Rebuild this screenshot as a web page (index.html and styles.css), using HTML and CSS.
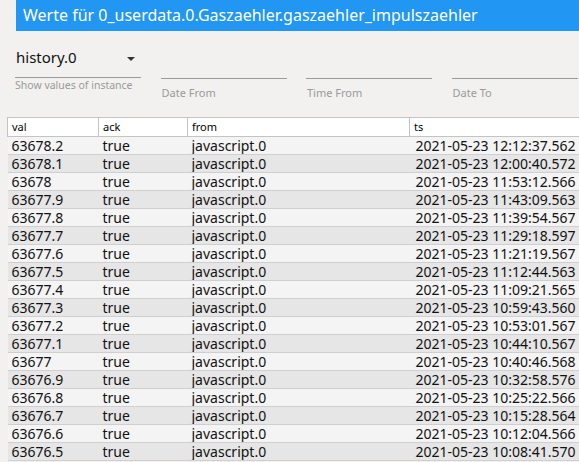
FILE: index.html
```html
<!DOCTYPE html>
<html lang="de">
<head>
<meta charset="utf-8">
<title>Werte</title>
<link rel="stylesheet" href="styles.css">
</head>
<body>
<div class="dialog">
  <div class="title">Werte für 0_userdata.0.Gaszaehler.gaszaehler_impulszaehler</div>
  <div class="filters">
    <div class="field">
      <div class="select"><span>history.0</span><span class="arrow"></span></div>
      <div class="helper">Show values of instance</div>
    </div>
    <div class="field">
      <div class="input"></div>
      <div class="label">Date From</div>
    </div>
    <div class="field">
      <div class="input"></div>
      <div class="label">Time From</div>
    </div>
    <div class="field">
      <div class="input"></div>
      <div class="label">Date To</div>
    </div>
  </div>
  <table class="grid">
    <colgroup>
      <col class="c-val"><col class="c-ack"><col class="c-from"><col class="c-ts">
    </colgroup>
    <thead>
      <tr><th>val</th><th>ack</th><th>from</th><th class="ts">ts</th></tr>
    </thead>
    <tbody>
      <tr><td>63678.2</td><td>true</td><td>javascript.0</td><td class="ts">2021-05-23 12:12:37.562</td></tr>
      <tr><td>63678.1</td><td>true</td><td>javascript.0</td><td class="ts">2021-05-23 12:00:40.572</td></tr>
      <tr><td>63678</td><td>true</td><td>javascript.0</td><td class="ts">2021-05-23 11:53:12.566</td></tr>
      <tr><td>63677.9</td><td>true</td><td>javascript.0</td><td class="ts">2021-05-23 11:43:09.563</td></tr>
      <tr><td>63677.8</td><td>true</td><td>javascript.0</td><td class="ts">2021-05-23 11:39:54.567</td></tr>
      <tr><td>63677.7</td><td>true</td><td>javascript.0</td><td class="ts">2021-05-23 11:29:18.597</td></tr>
      <tr><td>63677.6</td><td>true</td><td>javascript.0</td><td class="ts">2021-05-23 11:21:19.567</td></tr>
      <tr><td>63677.5</td><td>true</td><td>javascript.0</td><td class="ts">2021-05-23 11:12:44.563</td></tr>
      <tr><td>63677.4</td><td>true</td><td>javascript.0</td><td class="ts">2021-05-23 11:09:21.565</td></tr>
      <tr><td>63677.3</td><td>true</td><td>javascript.0</td><td class="ts">2021-05-23 10:59:43.560</td></tr>
      <tr><td>63677.2</td><td>true</td><td>javascript.0</td><td class="ts">2021-05-23 10:53:01.567</td></tr>
      <tr><td>63677.1</td><td>true</td><td>javascript.0</td><td class="ts">2021-05-23 10:44:10.567</td></tr>
      <tr><td>63677</td><td>true</td><td>javascript.0</td><td class="ts">2021-05-23 10:40:46.568</td></tr>
      <tr><td>63676.9</td><td>true</td><td>javascript.0</td><td class="ts">2021-05-23 10:32:58.576</td></tr>
      <tr><td>63676.8</td><td>true</td><td>javascript.0</td><td class="ts">2021-05-23 10:25:22.566</td></tr>
      <tr><td>63676.7</td><td>true</td><td>javascript.0</td><td class="ts">2021-05-23 10:15:28.564</td></tr>
      <tr><td>63676.6</td><td>true</td><td>javascript.0</td><td class="ts">2021-05-23 10:12:04.566</td></tr>
      <tr><td>63676.5</td><td>true</td><td>javascript.0</td><td class="ts">2021-05-23 10:08:41.570</td></tr>
    </tbody>
  </table>
</div>
</body>
</html>
```
FILE: styles.css
```css
html, body {
  margin: 0;
  padding: 0;
  background: #f2f1f0;
  overflow: hidden;
  height: 462px;
}
body {
  font-family: "Noto Sans", "Open Sans", sans-serif;
  color: #111;
}
.dialog {
  width: 579px;
}
.title {
  margin-left: 16px;
  height: 31px;
  line-height: 31px;
  padding-left: 7px;
  background: #2196f3;
  color: #fff;
  font-size: 16px;
  white-space: nowrap;
  overflow: hidden;
}
.filters {
  height: 86px;
  box-sizing: border-box;
  padding: 17px 0 0 15px;
  display: grid;
  grid-template-columns: 126px 126px 126px 126px;
  column-gap: 19.5px;
  align-items: start;
}
.select {
  display: flex;
  justify-content: space-between;
  align-items: flex-start;
  height: 29px;
  padding-left: 1px;
  border-bottom: 1px solid #9a9a9a;
  font-size: 15px;
  line-height: 19px;
  color: #111;
}
.arrow {
  width: 0;
  height: 0;
  margin: 9px 6px 0 0;
  border-left: 4px solid transparent;
  border-right: 4px solid transparent;
  border-top: 4px solid #333;
}
.helper {
  margin-top: 1px;
  font-size: 10.5px;
  line-height: 13px;
  color: #9a9a9a;
  white-space: nowrap;
}
.input {
  height: 30px;
  border-bottom: 1px solid #9a9a9a;
}
.label {
  margin-top: 7px;
  font-size: 11px;
  line-height: 13px;
  color: #9a9a9a;
  padding-left: 1px;
}
.grid {
  margin-left: 7px;
  width: 572px;
  border-collapse: collapse;
  table-layout: fixed;
}
.c-val { width: 91px; }
.c-ack { width: 89px; }
.c-from { width: 222px; }
.c-ts { width: 170px; }
.grid th {
  background: #fff;
  border: 1px solid #c4c4c4;
  font-weight: normal;
  font-size: 11px;
  line-height: 18px;
  text-align: left;
  padding: 0 4px;
  color: #000;
}
.grid td {
  font-size: 14px;
  line-height: 17px;
  padding: 0 4px;
  border-bottom: 1px solid #cfcfcf;
  white-space: nowrap;
  overflow: hidden;
  color: #111;
}
.grid td.ts { padding-left: 6px; }
.grid tbody tr:nth-child(odd) td { background: #f4f4f4; }
.grid tbody tr:nth-child(even) td { background: #e6e6e6; }
```
